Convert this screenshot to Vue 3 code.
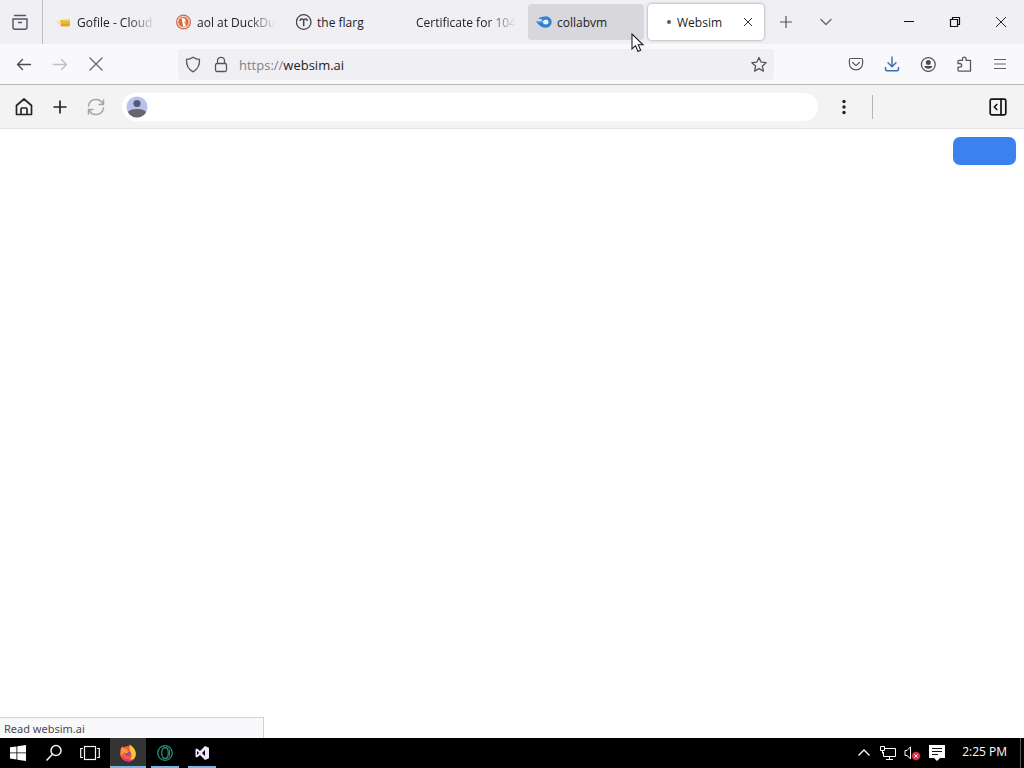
<script setup>
import { ref } from 'vue'

const tabs = [
  { title: 'Gofile - Cloud', icon: 'gofile', fade: true },
  { title: 'aol at DuckDu', icon: 'duck', fade: true },
  { title: 'the flarg', icon: 'flarg' },
  { title: 'Certificate for 104.', icon: '', fade: true },
  { title: 'collabvm', icon: 'collab', hover: true },
  { title: 'Websim', icon: 'dot', active: true }
]
const url = ref('')
</script>

<template>
  <div class="screen">
    <header class="tabbar">
      <button class="view" aria-label="Firefox View">
        <svg width="18" height="18" viewBox="0 0 18 18" fill="none" stroke="#55555e" stroke-width="1.4" stroke-linecap="round">
          <path d="M3.5 2.500h11M2 6h14v8.300a2 2 0 0 1-2 2H4a2 2 0 0 1-2-2zM7.500 9.500h3" />
        </svg>
      </button>
      <nav class="tabs" aria-label="Tabs">
        <div v-for="t in tabs" :key="t.title" class="tab" :class="{ hover: t.hover, active: t.active, fade: t.fade }">
          <svg v-if="t.icon === 'gofile'" class="fav" viewBox="0 0 16 16">
            <path d="M4 6h10v5.200q0 1.300-1.300 1.300H6q-1.200 0-1.500-1.200z" fill="#e9b429" />
            <path d="M7 5.500h7v2H6z" fill="#f3cb4d" /><path d="M0 7.500h5V10H2z" fill="#f8dca0" />
            <path d="M5 11h8" stroke="#cc9827" />
          </svg>
          <svg v-else-if="t.icon === 'duck'" class="fav" viewBox="0 0 16 16">
            <circle cx="7.500" cy="8" r="7.500" fill="#cb6a4a" />
            <circle cx="7.500" cy="8" r="5.700" fill="#d9683f" stroke="#f3d3c4" stroke-width="1.300" />
            <path d="M5.500 4c2.800-.4 4.400.8 4.100 3.200l-.3 2.300.5 2.700-2.600.6z" fill="#fff" />
            <path d="M8 7.600 11.300 8.200l-2.800 1.200z" fill="#f2a52e" />
          </svg>
          <svg v-else-if="t.icon === 'flarg'" class="fav" viewBox="0 0 16 16" fill="none" stroke="#45454c">
            <circle cx="7.700" cy="8" r="7.300" stroke-width="1.300" />
            <path d="M4.200 7q0-2.300 1.800-2 .9.200 1.700.9.800-.7 1.700-.9 1.800-.3 1.800 2M7.700 6v6.300" stroke-width="1.500" />
          </svg>
          <svg v-else-if="t.icon === 'collab'" class="fav" viewBox="0 0 16 16">
            <path d="M2 4.500Q5 2.500 10 2.300a5.700 5.700 0 0 1 0 11.400q-5 0-8.500-4.200L0 7h5.500l1-1.500z" fill="#2f83d2" />
            <path d="M0 7h6.500v1.200H.8z" fill="#69aee8" />
            <path d="M6.500 8q1-2.500 3.500-2.500a2.500 2.500 0 0 1 0 5Q7.500 10.500 6.500 8z" fill="#e5f3ff" />
          </svg>
          <svg v-else-if="t.icon === 'dot'" class="fav" viewBox="0 0 16 16"><circle cx="13" cy="8" r="2" fill="#5b5b62" /></svg>
          <span class="title">{{ t.title }}</span>
          <button v-if="t.active" class="close" aria-label="Close tab">
            <svg width="10" height="10" viewBox="0 0 10 10" stroke="#333338" stroke-width="1"><path d="m1 1 8 8M9 1 1 9" /></svg>
          </button>
        </div>
      </nav>
      <button class="new" aria-label="New tab">
        <svg width="14" height="14" viewBox="0 0 14 14" stroke="#55555e" stroke-width="1.200"><path d="M7 1v12M1 7h12" /></svg>
      </button>
      <button class="list" aria-label="List all tabs">
        <svg width="14" height="14" viewBox="0 0 14 14" fill="none" stroke="#66666e" stroke-width="1.300"><path d="m1.500 4 5.500 5.500L12.500 4" /></svg>
      </button>
      <div class="window">
        <button aria-label="Minimize"><svg width="12" height="12" viewBox="0 0 12 12" stroke="#111"><path d="M1 5.500h10" /></svg></button>
        <button aria-label="Restore">
          <svg width="12" height="12" viewBox="0 0 12 12" fill="none" stroke="#111"><path d="M1.500 3.500h7v7h-7zM3.500 3.500v-2h7v7h-2" stroke-width="1.200" /></svg>
        </button>
        <button aria-label="Close"><svg width="12" height="12" viewBox="0 0 12 12" stroke="#222"><path d="m1 1 10 10M11 1 1 11" /></svg></button>
      </div>
    </header>

    <div class="navbar">
      <button aria-label="Back">
        <svg width="18" height="18" viewBox="0 0 18 18" fill="none" stroke="#4b4b54" stroke-width="1.400" stroke-linecap="round" stroke-linejoin="round"><path d="M15.500 9.500H2.500M7.500 4.500l-5 5 5 5" /></svg>
      </button>
      <button aria-label="Forward" disabled>
        <svg width="18" height="18" viewBox="0 0 18 18" fill="none" stroke="#c0c0c4" stroke-width="1.400" stroke-linecap="round" stroke-linejoin="round"><path d="M2.500 9.500h13M10.500 4.500l5 5-5 5" /></svg>
      </button>
      <button aria-label="Stop">
        <svg width="18" height="18" viewBox="0 0 18 18" stroke="#66666e" stroke-width="1.300" stroke-linecap="round"><path d="m3 3 12 12M15 3 3 15" /></svg>
      </button>
      <div class="address">
        <svg width="18" height="18" viewBox="0 0 18 18" fill="none" stroke="#55555e" stroke-width="1.300" stroke-linejoin="round"><path d="M9 1.200q3 2.200 6.500 2.200c.3 5.600-1.500 9.800-6.500 12.400C4 13.200 2.200 9 2.500 3.400 6 3.400 9 1.200 9 1.200z" /></svg>
        <svg class="lock" width="16" height="18" viewBox="0 0 16 18" fill="none" stroke="#55555e" stroke-width="1.300"><rect x="2.500" y="7.500" width="11" height="8" rx="1.500" /><path d="M4.500 7.500V4.800a3.500 3.500 0 0 1 7 0v2.700" /></svg>
        <a class="url" href="#"><span>https://</span>websim.ai</a>
        <button class="star" aria-label="Bookmark this page">
          <svg width="18" height="18" viewBox="0 0 18 18" fill="none" stroke="#55555e" stroke-width="1.300" stroke-linejoin="round"><path d="m9 1.500 2.100 4.600 5 .6-3.700 3.400 1 5-4.400-2.500-4.400 2.500 1-5-3.700-3.400 5-.6z" /></svg>
        </button>
      </div>
      <button aria-label="Save to Pocket">
        <svg width="16" height="16" viewBox="0 0 16 16" fill="none" stroke="#55555e" stroke-width="1.200" stroke-linecap="round" stroke-linejoin="round"><path d="M2.700 2.500h10.600q1.300 0 1.300 1.500v3.500a6.600 6.300 0 0 1-13.200 0V4q0-1.500 1.300-1.500zM4.500 6.500 8 9.600l3.500-3.100" /></svg>
      </button>
      <button aria-label="Downloads">
        <svg width="16" height="16" viewBox="0 0 16 16" fill="none" stroke="#3a69b8" stroke-width="1.400" stroke-linecap="round" stroke-linejoin="round"><path d="M8 1v9.500M4 6.700l4 4 4-4M1.500 11.500v1.700q0 1.500 1.500 1.500h10q1.500 0 1.500-1.500v-1.700" /></svg>
      </button>
      <button aria-label="Account">
        <svg width="16" height="16" viewBox="0 0 16 16" fill="none" stroke="#55555e" stroke-width="1.300"><circle cx="8.300" cy="8.500" r="6.900" /><circle cx="8.300" cy="6.500" r="2.500" fill="#4b4b54" stroke="none" /><path d="M4.300 10h8q-.6 2.800-4 2.800t-4-2.800z" fill="#4b4b54" stroke="none" /></svg>
      </button>
      <button aria-label="Extensions">
        <svg width="16" height="16" viewBox="0 0 16 16" fill="none" stroke="#55555e" stroke-width="1.300" stroke-linejoin="round"><path d="M2 7.500V5.300q0-1 1-1h3.500V3a1.800 1.800 0 0 1 3.600 0v1.300H14.500v10.800H3q-1 0-1-1v-2.900h1.800a1.850 1.850 0 0 0 0-3.700z" /></svg>
      </button>
      <button aria-label="Menu">
        <svg width="16" height="16" viewBox="0 0 16 16" stroke="#66666e" stroke-width="1.200"><path d="M2 3.500h12M2 8h12M2 12.500h12" /></svg>
      </button>
    </div>

    <div class="simbar">
      <button aria-label="Home">
        <svg width="20" height="20" viewBox="0 0 20 20" fill="none" stroke="#26262a" stroke-width="1.700" stroke-linecap="round" stroke-linejoin="round"><path d="M2.500 8.500 10 2l7.500 6.500v9h-15zM7 17.500V12q0-1 1-1h4q1 0 1 1v5.500" /></svg>
      </button>
      <button aria-label="New">
        <svg width="16" height="16" viewBox="0 0 16 16" stroke="#26262a" stroke-width="1.700"><path d="M8 1.500v13M1.500 8h13" /></svg>
      </button>
      <button aria-label="Reload" disabled>
        <svg width="20" height="20" viewBox="0 0 20 20" fill="none" stroke="#a4a4a6" stroke-width="1.500" stroke-linecap="round" stroke-linejoin="round"><path d="M17.500 3v4.500H13M2.500 17v-4.500H7M17 7.500A7.500 7.500 0 0 0 2.500 9M3 12.500A7.500 7.500 0 0 0 17.500 11" /></svg>
      </button>
      <div class="prompt">
        <svg width="22" height="22" viewBox="0 0 22 22">
          <defs><clipPath id="face"><circle cx="11" cy="11" r="10.500" /></clipPath></defs>
          <g clip-path="url(#face)"><rect width="22" height="22" fill="#bcc1ec" /><circle cx="11" cy="7.500" r="3.600" fill="#545a78" /><path d="M1 22v-4q1-5 10-5t10 5v4z" fill="#64676d" /></g>
        </svg>
        <input v-model="url" type="text" aria-label="Address or prompt" />
      </div>
      <button class="more" aria-label="More">
        <svg width="16" height="16" viewBox="0 0 16 16" fill="#222"><circle cx="8" cy="2.500" r="1.700" /><circle cx="8" cy="8" r="1.700" /><circle cx="8" cy="13.500" r="1.700" /></svg>
      </button>
      <div class="divider"></div>
      <button class="panel" aria-label="Open side panel">
        <svg width="18" height="18" viewBox="0 0 18 18" fill="none" stroke="#151515" stroke-width="1.700" stroke-linecap="round" stroke-linejoin="round"><rect x="1.200" y="1.200" width="15.600" height="15.600" rx="1.500" /><path d="M12 1.200v15.600M7.800 6.500 5.300 9l2.500 2.500" /></svg>
      </button>
    </div>

    <main class="page">
      <button class="primary" aria-label="Action"></button>
      <div class="status">Read websim.ai</div>
    </main>

    <footer class="taskbar">
      <button aria-label="Start">
        <svg width="16" height="16" viewBox="0 0 16 16" fill="#fff"><path d="M0 2.300 6.500 1.400v6.100H0zM7.300 1.300 16 0v7.500H7.300zM0 8.300h6.500v6.200L0 13.600zM7.300 8.300H16V16l-8.700-1.300z" /></svg>
      </button>
      <button aria-label="Search">
        <svg width="18" height="18" viewBox="0 0 18 18" fill="none" stroke="#f4f4f4" stroke-width="1.500"><circle cx="11" cy="6.500" r="5" /><path d="M7.500 10.200 1.500 16.500" /></svg>
      </button>
      <button aria-label="Task view">
        <svg width="20" height="16" viewBox="0 0 20 16" fill="none" stroke="#f4f4f4" stroke-width="1.200"><rect x="4.500" y="1.500" width="11" height="13" /><path d="M3 3.500H.7v9H3M17 3.500h2.300v9H17" /></svg>
      </button>
      <button class="app current" aria-label="Firefox">
        <svg width="18" height="18" viewBox="0 0 18 18">
          <circle cx="9" cy="9.800" r="7.700" fill="#f45b3d" /><path d="M10.500.5q5.500 3 6.300 8.500c.4 5-3 8.300-7.300 8.500Q14 13 12 8.500q-2-2-1.500-8z" fill="#ffc532" />
          <path d="M1.600 8Q1 4.500 3.500 2.200L5 4.500l4 .5-3 3-4.400 4z" fill="#ff9730" /><path d="M2 12q2 5.500 8 5.400 3-.2 5-2.400-7 2-13-3z" fill="#ed2c80" />
          <circle cx="9" cy="9.500" r="2.600" fill="#8a50b4" /><path d="M5 6.500q3-.5 5 1-1 1.600-3.800 1.800z" fill="#ff9c2f" />
        </svg>
      </button>
      <button class="app" aria-label="Opera">
        <svg width="16" height="16" viewBox="0 0 16 16" fill="none" stroke="#258f77"><circle cx="8" cy="8" r="7.300" stroke-width="1.300" /><ellipse cx="8" cy="8" rx="3.300" ry="5.500" stroke-width="1.300" /><path d="M5.500 3.300Q10 1 12.500 5v6q-2.500 4-7 1.700" /></svg>
      </button>
      <button class="app" aria-label="Visual Studio">
        <svg width="14" height="14" viewBox="0 0 14 14"><path fill="#f1e6fc" fill-rule="evenodd" d="M10 0 14 1.700v10.600L10 14 5 9 2 11.500.5 10.800V3.200L2 2.500 5 5zM10 4 7 7l3 3zM2 5v4l2-2z" /></svg>
      </button>
      <div class="tray">
        <button aria-label="Show hidden icons"><svg width="14" height="14" viewBox="0 0 14 14" fill="none" stroke="#fff" stroke-width="1.300"><path d="M1.500 9.500 7 4l5.500 5.500" /></svg></button>
        <button aria-label="Network"><svg width="18" height="16" viewBox="0 0 18 16" fill="none" stroke="#fff"><path d="M6 3.500h10.500v8H4.500V7M10.500 11.500v3M7 14.500h7M1.500 1.500h4v4h-4zM3.500 5.500v3" /></svg></button>
        <button aria-label="Volume muted"><svg width="18" height="16" viewBox="0 0 18 16" fill="none"><path d="M2 5.500h2l3.500-3.700v12L4 10.500H2z" stroke="#fff" /><circle cx="13" cy="11" r="4.200" fill="#d52e46" /><path d="m11.300 9.300 3.400 3.400m0-3.400-3.400 3.400" stroke="#ffe8ec" /></svg></button>
        <button class="notes" aria-label="Notifications"><svg width="16" height="16" viewBox="0 0 16 16"><path d="M0 0h16v13h-5l-3 3-3-3H0z" fill="#fff" /><path d="M3 3.500h10M3 6.500h10M3 9.500h6" stroke="#111" /></svg></button>
        <time>2:25 PM</time>
        <button class="desktop" aria-label="Show desktop"></button>
      </div>
    </footer>

    <svg class="cursor" width="14" height="20" viewBox="0 0 14 20"><path d="M1 1v15l3.500-3.300L7 18.500l2.700-1.200-2.500-5.500H12z" fill="#fff" stroke="#222" stroke-width="1.100" /></svg>
  </div>
</template>

<style>
body {
  margin: 0;
}
</style>

<style scoped>
.screen {
  position: relative;
  display: flex;
  flex-direction: column;
  min-height: 100vh;
  background: #fff;
  color: #222226;
  font: 12px/16px "Open Sans", "Noto Sans", sans-serif;
}
button {
  display: flex;
  flex: none;
  align-items: center;
  justify-content: center;
  width: 36px;
  margin: 0;
  padding: 0;
  border: 0;
  background: none;
}
svg {
  flex: none;
}
.tabbar {
  display: flex;
  height: 44px;
  background: #f0eff4;
}
.view {
  width: 42px;
  padding-right: 2px;
}
.tabs {
  display: flex;
  gap: 4px;
  padding: 4px 4px 4px 5px;
  border-left: 1px solid #bdbcc4;
}
.tab {
  box-sizing: border-box;
  display: flex;
  align-items: center;
  width: 116px;
  height: 36px;
  padding: 0 8px;
  border-radius: 4px;
}
.tab.hover {
  background: #d7d7dc;
}
.tab.active {
  background: #fff;
  box-shadow: 0 0 3px rgba(0, 0, 0, 0.4);
}
.fav {
  width: 16px;
  height: 16px;
  margin-right: 5px;
}
.title {
  flex: 1;
  min-width: 0;
  padding-top: 2px;
  white-space: nowrap;
}
.fade .title {
  mask-image: linear-gradient(to left, transparent, #000 28px);
}
.close {
  width: 16px;
  height: 16px;
}
.new {
  width: 36px;
}
.list {
  width: 36px;
  margin-left: 4px;
}
.window {
  display: flex;
  margin-left: auto;
}
.window button {
  width: 46px;
}
.navbar {
  display: flex;
  box-sizing: border-box;
  height: 41px;
  padding: 0 6px;
  border-bottom: 1px solid #b9b8bd;
  background: #f9f9fb;
}
.address {
  display: flex;
  flex: 1;
  align-items: center;
  min-width: 0;
  margin: 5px 64px 4px;
  padding-left: 6px;
  border-radius: 4px;
  background: #f0f0f4;
}
.lock {
  margin: 0 10px 0 11px;
}
.url {
  flex: 1;
  color: #222226;
  font-size: 13px;
  text-decoration: none;
}
.url span {
  color: #808087;
}
.star {
  width: 30px;
}
.simbar {
  display: flex;
  align-items: center;
  box-sizing: border-box;
  height: 44px;
  padding: 0 8px 0 6px;
  border-bottom: 1px solid #e4e4e6;
  background: #f3f3f4;
}
.prompt {
  display: flex;
  flex: 1;
  align-items: center;
  height: 28px;
  margin-left: 8px;
  padding-left: 4px;
  border-radius: 14px;
  background: #fff;
}
.prompt input {
  flex: 1;
  min-width: 0;
  border: 0;
  outline: 0;
  background: none;
  font: inherit;
}
.more {
  margin: 0 10px 0 8px;
}
.divider {
  width: 1px;
  height: 24px;
  margin-right: 107px;
  background: #b5b5b9;
}
.page {
  position: relative;
  flex: 1;
  background: #fefefe;
}
.primary {
  width: 63px;
  height: 28px;
  margin: 8px 8px 0 auto;
  border-radius: 7px;
  background: #3b82f0;
}
.status {
  position: absolute;
  bottom: 0;
  left: 0;
  box-sizing: border-box;
  width: 264px;
  padding: 3px 4px 1px;
  border: solid #d2d2d5;
  border-width: 1px 1px 0 0;
  background: #f9f9fb;
  color: #4a4a50;
  font-family: "Noto Sans", "Open Sans", sans-serif;
  font-size: 11px;
}
.taskbar {
  display: flex;
  height: 30px;
  background: #000;
}
.app {
  box-sizing: border-box;
  width: 28px;
  margin-left: 9px;
  padding-top: 2px;
  border-bottom: 2px solid #76b5e5;
}
.app.current {
  width: 36px;
  margin: 0 -4px 0 2px;
  background: #343434;
}
.tray {
  display: flex;
  margin-left: auto;
}
.tray button {
  width: 24px;
}
.tray .notes {
  width: 26px;
}
time {
  margin: 0 14px 0 12px;
  color: #fff;
  line-height: 28px;
}
.tray .desktop {
  width: 4px;
  margin-left: -1px;
  border-left: 1px solid #55555a;
}
.cursor {
  position: absolute;
  top: 33px;
  left: 631px;
}
</style>
